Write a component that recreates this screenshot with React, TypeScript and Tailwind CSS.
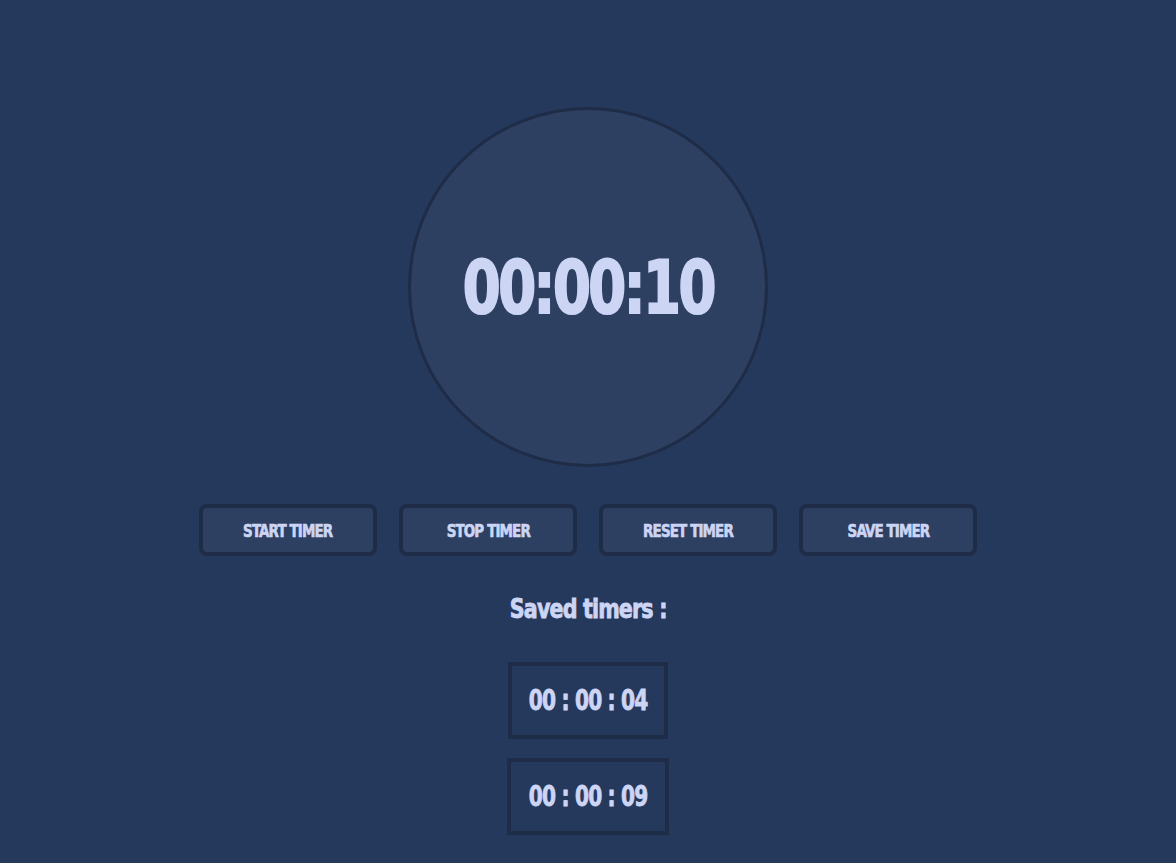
const font = 'font-["Impact","DejaVu_Sans",sans-serif] font-stretch-condensed';

const buttons = ['START TIMER', 'STOP TIMER', 'RESET TIMER', 'SAVE TIMER'];
const saved = ['00 : 00 : 04', '00 : 00 : 09'];

export default function App() {
  return (
    <div className={`min-h-screen w-full bg-[#25395d] flex flex-col items-center pt-[107px] text-[#cdd5f4] ${font}`}>
      {/* Clock face */}
      <div className="w-[360px] h-[360px] rounded-full border-[3px] border-[#1f2c47] bg-[#2e4062] flex items-center justify-center">
        <span className="inline-block scale-x-[0.83] text-[73px] font-bold leading-none tracking-[-3px] whitespace-nowrap [-webkit-text-stroke:2px_#cdd5f4]">
          00:00:10
        </span>
      </div>

      {/* Controls */}
      <div className="mt-[37px] flex gap-[22px]">
        {buttons.map((label) => (
          <button
            key={label}
            className="w-[178px] h-[52px] pt-[3px] rounded-lg border-4 border-[#1f2c47] bg-[#2e4062] text-[#cdd5f4]"
          >
            <span className="inline-block scale-x-[0.88] text-[17px] font-bold tracking-[-1px] whitespace-nowrap [-webkit-text-stroke:0.6px_#cdd5f4]">
              {label}
            </span>
          </button>
        ))}
      </div>

      <h2 className="mt-[36px] scale-x-[0.85] text-[27px] font-bold leading-[34px] tracking-[-1px] [-webkit-text-stroke:0.8px_#cdd5f4]">
        Saved timers :
      </h2>

      <div className="mt-[36px] flex flex-col items-center gap-[19px]">
        {saved.map((t, i) => (
          <div
            key={t}
            className={`${i === 0 ? 'w-[160px]' : 'w-[162px]'} h-[77px] border-4 border-[#1f2c47] flex items-center justify-center`}
          >
            <span className="inline-block scale-x-[0.8] text-[28px] font-bold tracking-[-1px] whitespace-nowrap [-webkit-text-stroke:0.8px_#cdd5f4]">
              {t}
            </span>
          </div>
        ))}
      </div>
    </div>
  );
}
